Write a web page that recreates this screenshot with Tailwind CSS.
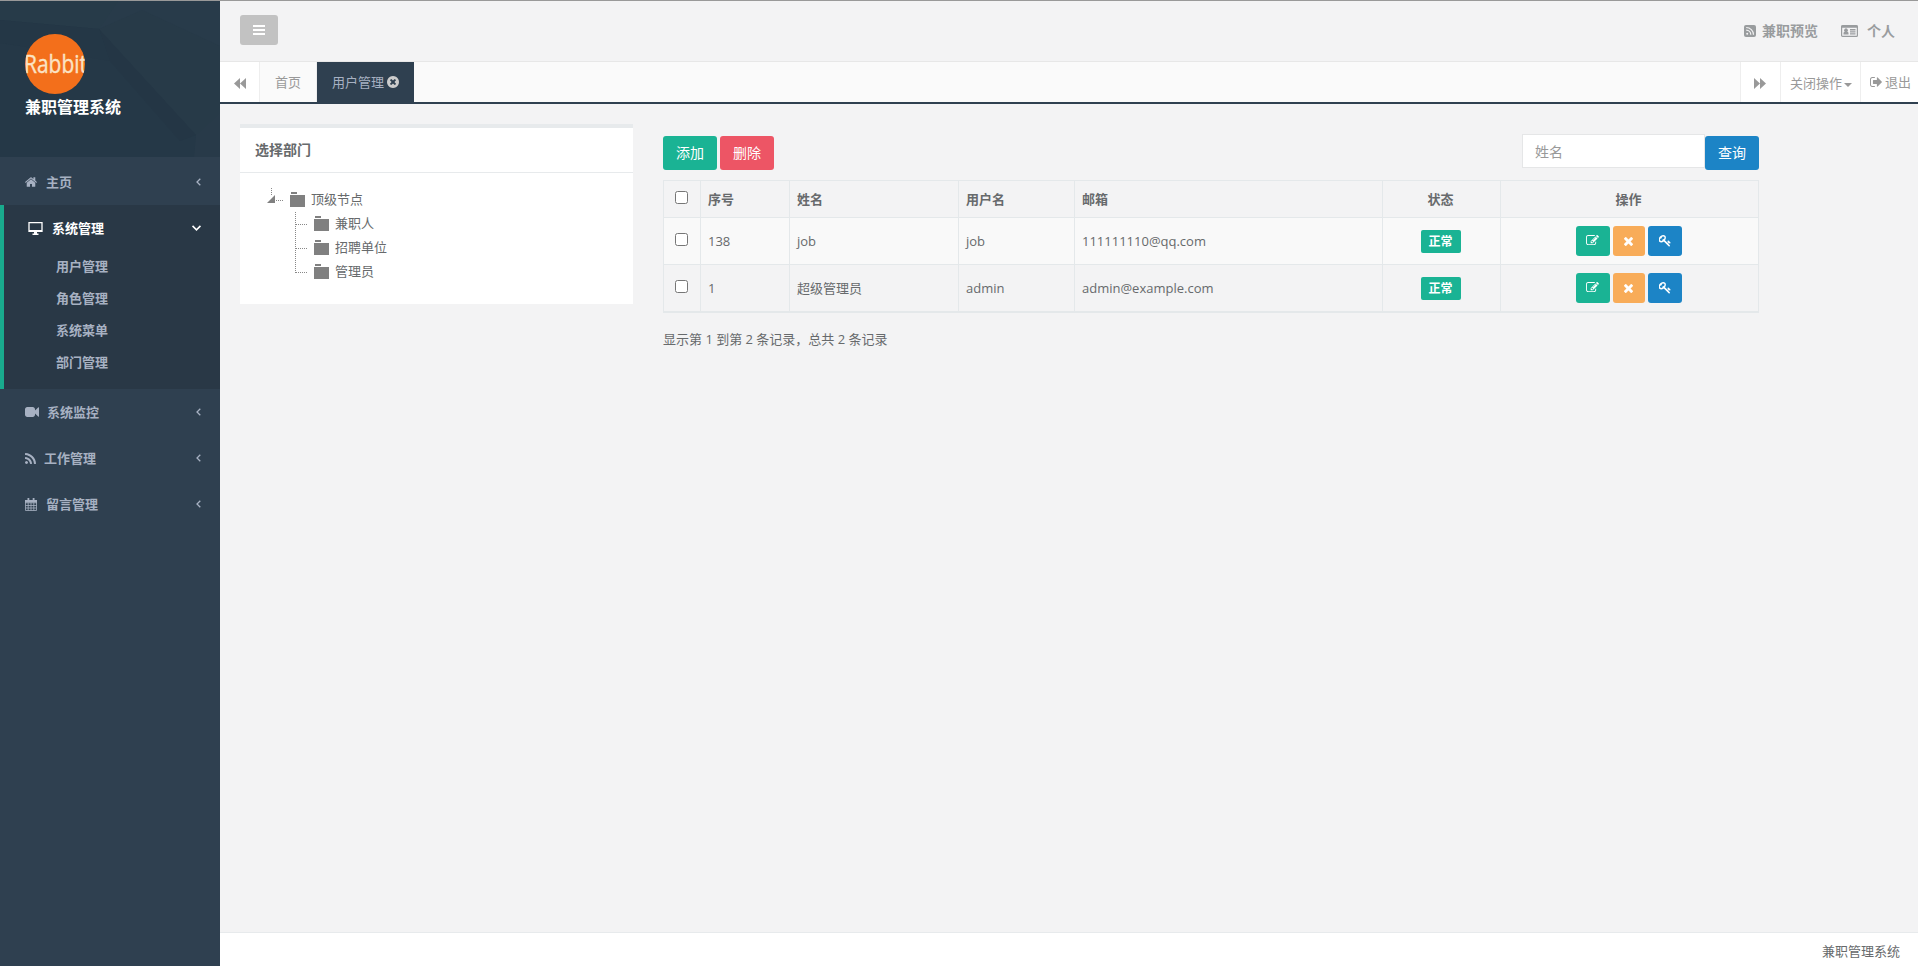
<!DOCTYPE html>
<html lang="zh-CN">
<head>
<meta charset="utf-8">
<title>兼职管理系统</title>
<script src="https://cdn.jsdelivr.net/npm/@tailwindcss/browser@4"></script>
</head>
<body class="h-[966px] w-[1918px] overflow-hidden border-t border-[#999] bg-[#2f4050] font-['Open_Sans','Noto_Sans_CJK_SC',sans-serif] text-[13px] leading-5 text-[#676a6c]">
<svg class="hidden">
  <symbol id="home" viewBox="89 253 1614 1283"><path d="M1472 992v480q0 26-19 45t-45 19h-384v-384h-256v384h-384q-26 0-45-19t-19-45v-480q0-1 .5-3t.5-3l575-474 575 474q1 2 1 6zm223-69l-62 74q-8 9-21 11h-3q-13 0-21-7l-692-577-692 577q-12 8-24 7-13-2-21-11l-62-74q-8-10-7-23.5t11-21.5l719-599q32-26 76-26t76 26l244 204v-195q0-14 9-23t23-9h192q14 0 23 9t9 23v408l219 182q10 8 11 21.5t-7 23.5z"/></symbol>
  <symbol id="video" viewBox="0 288 1792 1216"><path d="M1792 352v1088q0 42-39 59-13 5-25 5-27 0-45-19l-403-403v166q0 119-84.500 203.500t-203.500 84.500h-704q-119 0-203.500-84.500t-84.500-203.500v-704q0-119 84.500-203.500t203.500-84.500h704q119 0 203.500 84.500t84.500 203.500v165l403-402q18-19 45-19 12 0 25 5 39 17 39 59z"/></symbol>
  <symbol id="rss" viewBox="192 128 1408 1408"><path d="M576 1344q0 80-56 136t-136 56-136-56-56-136 56-136 136-56 136 56 56 136zm512 123q2 28-17 48-18 21-47 21h-135q-25 0-43-16.500t-20-41.500q-22-229-184.500-391.500t-391.500-184.500q-25-2-41.500-20t-16.500-43v-135q0-29 21-47 17-17 43-17h5q160 13 306 80.500t259 181.500q114 113 181.500 259t80.500 306zm512 2q2 27-18 47-18 20-46 20h-143q-26 0-44.500-17.500t-19.500-42.500q-12-215-101-408.500t-231.500-336-336-231.500-408.500-102q-25-1-42.500-19.500t-17.500-43.500v-143q0-28 20-46 18-18 44-18h3q262 13 501.500 120t425.500 294q187 186 294 425.500t120 501.500z"/></symbol>
  <symbol id="edit" viewBox="0 128 1792 1536"><path d="M888 1184l116-116-152-152-116 116v56h96v96h56zm440-720q-16-16-33 1l-350 350q-17 17-1 33t33-1l350-350q17-17 1-33zm80 594v190q0 119-84.500 203.500t-203.500 84.500h-832q-119 0-203.500-84.500t-84.500-203.500v-832q0-119 84.500-203.500t203.500-84.500h832q63 0 117 25 15 7 18 23 3 17-9 29l-49 49q-14 14-32 8-23-6-45-6h-832q-66 0-113 47t-47 113v832q0 66 47 113t113 47h832q66 0 113-47t47-113v-126q0-13 9-22l64-64q15-15 35-7t20 29zm-96-738l288 288-672 672h-288v-288zm444 132l-92 92-288-288 92-92q28-28 68-28t68 28l152 152q28 28 28 68t-28 68z"/></symbol>
  <symbol id="times" viewBox="302 366 1188 1188"><path d="M1490 1322q0 40-28 68l-136 136q-28 28-68 28t-68-28l-294-294-294 294q-28 28-68 28t-68-28l-136-136q-28-28-28-68t28-68l294-294-294-294q-28-28-28-68t28-68l136-136q28-28 68-28t68 28l294 294 294-294q28-28 68-28t68 28l136 136q28 28 28 68t-28 68l-294 294 294 294q28 28 28 68z"/></symbol>
  <symbol id="key" viewBox="64 128 1664 1664"><path d="M832 512q0-80-56-136t-136-56-136 56-56 136q0 42 19 83-41-19-83-19-80 0-136 56t-56 136 56 136 136 56 136-56 56-136q0-42-19-83 41 19 83 19 80 0 136-56t56-136zm851 704q0 17-49 66t-66 49q-9 0-28.500-16t-36.500-33-38.500-40-24.500-26l-96 96 220 220q28 28 28 68 0 42-39 81t-81 39q-40 0-68-28l-671-671q-176 131-365 131-163 0-265.500-102.500t-102.500-265.500q0-160 95-313t248-248 313-95q163 0 265.500 102.500t102.500 265.500q0 189-131 365l355 355 96-96q-3-3-26-24.500t-40-38.500-33-36.500-16-28.500q0-17 49-66t66-49q13 0 23 10 6 6 46 44.500t82 79.500 86.500 86 73 78 28.500 41z"/></symbol>
  <symbol id="circle-x" viewBox="128 128 1536 1536"><path d="M1277 1122q0-26-19-45l-181-181 181-181q19-19 19-45 0-27-19-46l-90-90q-19-19-46-19-26 0-45 19l-181 181-181-181q-19-19-45-19-27 0-46 19l-90 90q-19 19-19 46 0 26 19 45l181 181-181 181q-19 19-19 45 0 27 19 46l90 90q19 19 46 19 26 0 45-19l181-181 181 181q19 19 45 19 27 0 46-19l90-90q19-19 19-46zm387-226q0 209-103 385.500t-279.500 279.500-385.500 103-385.500-103-279.500-279.500-103-385.500 103-385.500 279.500-279.500 385.500-103 385.500 103 279.500 279.500 103 385.500z"/></symbol>
  <symbol id="signout" viewBox="64 256 1568 1280"><path d="M704 1440q0 4 1 20t.5 26.500-3 23.500-10 19.500-20.500 6.500h-320q-119 0-203.500-84.500t-84.500-203.500v-704q0-119 84.500-203.500t203.500-84.500h320q13 0 22.500 9.500t9.500 22.500q0 4 1 20t.5 26.500-3 23.500-10 19.500-20.500 6.500h-320q-66 0-113 47t-47 113v704q0 66 47 113t113 47h312l11.500 1 11.500 3 8 5.500 7 9 2 13.500zm928-544q0 26-19 45l-544 544q-19 19-45 19t-45-19-19-45v-288h-448q-26 0-45-19t-19-45v-384q0-26 19-45t45-19h448v-288q0-26 19-45t45-19 45 19l544 544q19 19 19 45z"/></symbol>
  <symbol id="chev" viewBox="0 0 5 8"><path d="M4.300.7 1 4l3.300 3.300" fill="none" stroke="currentColor" stroke-width="1.300"/></symbol>
  <symbol id="folder" viewBox="0 0 15 15"><path d="M1 0h6v2H1zM0 3h15v12H0z"/></symbol>
</svg>
<div class="flex h-[965px]">
  <nav class="w-[220px] shrink-0 font-semibold text-[#a7b1c2]">
    <header class="relative h-[156px] bg-[#253847] pl-[25px] pt-[33px]">
      <svg class="absolute inset-0" width="220" height="156" viewBox="0 0 220 156">
        <path d="M0 0H220V142L196 134 99 28 0 19z" fill="#283b4a"/>
        <path d="M118 0 99 28 0 19V0z" fill="#273b49"/>
        <path d="M99 28 142 9 220 45V142L196 134z" fill="#273a48"/>
        <path d="M99 28 196 134 180 140 110 60z" fill="#243645"/>
        <path d="M0 19 99 28 110 60 20 45 0 42z" fill="#243746"/>
        <path d="M196 134 220 112V156H194z" fill="#283a49"/>
      </svg>
      <svg class="relative block" width="60" height="60" viewBox="0 0 60 60">
        <clipPath id="disc"><circle cx="30" cy="30" r="30"/></clipPath>
        <g clip-path="url(#disc)"><path d="M0 0h60v60H0z" fill="#f36f1b"/><text x="-1" y="39" font-family="Open Sans" font-weight="400" font-size="25" textLength="63" lengthAdjust="spacingAndGlyphs" fill="#fbe3c4" stroke="#fbe3c4" stroke-width=".4">Rabbit</text></g>
      </svg>
      <h1 class="relative mt-[3px] text-base leading-5 font-bold text-white">兼职管理系统</h1>
    </header>
    <ul class="pt-0.5">
      <li class="flex h-[46px] items-center pl-[25px] pr-[19px]"><svg class="h-[10px] w-3 fill-current"><use href="#home"/></svg><span class="ml-[9px] pb-px">主页</span><svg class="ml-auto h-2 w-[5px]"><use href="#chev"/></svg></li>
      <li class="h-[184px] border-l-4 border-[#19aa8d] bg-[#293846]">
        <div class="flex h-[46px] items-center pl-6 pr-[21px] font-bold text-white"><svg class="h-[13px] w-[15px]" viewBox="0 0 15 13"><path d="M1 .7h13v8.600H1z" fill="none" stroke="currentColor" stroke-width="1.300"/><path d="M1 8h13v2H1zM6 10h3v1.500h1.500V13h-6v-1.500H6z" fill="currentColor"/></svg><span class="ml-[9px] pb-px">系统管理</span><svg class="ml-auto h-2 w-[5px] -rotate-90 scale-120"><use href="#chev"/></svg></div>
        <ul class="-mt-px pl-[52px] leading-8"><li>用户管理</li><li>角色管理</li><li>系统菜单</li><li>部门管理</li></ul>
      </li>
      <li class="flex h-[46px] items-center pl-[25px] pr-[19px]"><svg class="h-[10px] w-[14px] fill-current"><use href="#video"/></svg><span class="ml-2 pb-px">系统监控</span><svg class="ml-auto h-2 w-[5px]"><use href="#chev"/></svg></li>
      <li class="flex h-[46px] items-center pl-[25px] pr-[19px]"><svg class="h-[11px] w-[11px] fill-current"><use href="#rss"/></svg><span class="ml-2 pb-px">工作管理</span><svg class="ml-auto h-2 w-[5px]"><use href="#chev"/></svg></li>
      <li class="flex h-[46px] items-center pl-[25px] pr-[19px]"><svg class="h-[13px] w-3" viewBox="0 0 12 13"><path d="M.5 2.500h11v10H.5zM0 4.800h12M.5 7.500h11M.5 10h11M3.200 4.500v8M6 4.500v8M8.800 4.500v8" fill="none" stroke="currentColor" stroke-width=".8"/><path d="M0 2h12v2.500H0zM2.500 0h1.800v3H2.500zM7.700 0h1.800v3H7.700z" fill="currentColor"/></svg><span class="ml-[9px] pb-px">留言管理</span><svg class="ml-auto h-2 w-[5px]"><use href="#chev"/></svg></li>
    </ul>
  </nav>
  <div class="flex w-[1698px] flex-col bg-[#f3f3f4]">
    <div class="flex h-[60px] shrink-0 items-start pl-5 pr-[23px] pt-[14px] text-sm font-semibold text-[#999c9e]">
      <button class="flex h-[30px] w-[38px] items-center justify-center rounded-[3px] bg-[#c2c2c2]"><svg width="12" height="10" viewBox="0 0 12 10" fill="#fff"><path d="M0 0h12v2H0zM0 4h12v2H0zM0 8h12v2H0z"/></svg></button>
      <a class="ml-auto flex h-8 items-center"><svg class="mr-1.5" width="12" height="12" viewBox="0 0 12 12"><rect width="12" height="12" rx="2" fill="currentColor"/><circle cx="3.200" cy="8.800" r="1" fill="#f3f3f4"/><path d="M2.200 5.200a4.600 4.600 0 0 1 4.600 4.600M2.200 2.500a7.300 7.300 0 0 1 7.300 7.300" fill="none" stroke="#f3f3f4" stroke-width="1.200"/></svg>兼职预览</a>
      <a class="ml-[23px] flex h-8 items-center"><svg class="mr-[9px]" width="17" height="12" viewBox="0 0 17 12"><rect x=".6" y=".6" width="15.800" height="10.800" rx="1" fill="none" stroke="currentColor" stroke-width="1.200"/><path d="M.5.500h16v2.300H.5zM2.500 9.500V8q.2-1.300 1.300-1.300a1.900 1.900 0 1 1 2.400 0q1.100 0 1.300 1.300v1.500zM9 4.100h5.500v1.300H9zM9 6.200h5.500v1.300H9zM9 8.300h5.500v1.300H9z" fill="currentColor"/></svg>个人</a>
    </div>
    <div class="flex h-[43px] shrink-0 border-b-2 border-t border-b-[#2f4050] border-t-[#e7e7e7] bg-[#fafafa] text-[#999]">
      <div class="flex w-10 items-center border-r border-[#eee] bg-white pl-[14px] pt-0.5"><svg width="12" height="11" viewBox="0 0 12 11" fill="currentColor"><path d="M6 0v11L0 5.500zM12 0v11L6 5.500z"/></svg></div>
      <div class="flex w-[57px] items-center justify-center border-r border-[#eee] pb-px">首页</div>
      <div class="flex w-[97px] items-center justify-center bg-[#2f4050] pb-px text-[#a7b1c2]">用户管理<svg class="ml-[3px] h-3 w-3 fill-[#ccc]"><use href="#circle-x"/></svg></div>
      <div class="ml-auto flex w-10 items-center border-l border-[#eee] bg-white pl-[13px] pt-0.5"><svg width="12" height="11" viewBox="0 0 12 11" fill="currentColor"><path d="M0 0v11l6-5.500zM6 0v11l6-5.500z"/></svg></div>
      <div class="flex w-20 items-center border-l border-[#eee] bg-white pl-[9px] pt-px">关闭操作<svg class="ml-[2px] mt-1" width="8" height="4" viewBox="0 0 8 4" fill="currentColor"><path d="M0 0h8L4 4z"/></svg></div>
      <div class="flex w-[58px] items-center border-l border-[#eee] bg-white pb-px pl-[9px]"><svg class="mr-[3px] h-[10px] w-3 fill-current"><use href="#signout"/></svg>退出</div>
    </div>
    <main class="flex flex-1 items-start pl-5 pt-5">
      <section class="h-[180px] w-[393px] border-t-4 border-[#e7eaec] bg-white">
        <h2 class="h-[45px] border-b border-[#e7eaec] pl-[15px] pt-[12px] text-sm leading-5 font-semibold">选择部门</h2>
        <div class="pl-[27px] pt-[15px] leading-[23px]">
          <div class="flex h-6 items-start"><svg class="mr-[6px]" width="17" height="24" viewBox="0 0 17 24"><path d="M4.500 0v8M9 12.500h8" stroke="#888" stroke-dasharray="1 1" fill="none"/><path d="M8 7v8H0z" fill="#808080"/></svg><svg class="mr-[6px] mt-1 h-[15px] w-[15px] fill-[#808080]"><use href="#folder"/></svg>顶级节点</div>
          <div class="flex h-6 items-start pl-7"><svg class="mr-[6px]" width="13" height="24" viewBox="0 0 13 24"><path d="M.5 0v24M1 12.500h12" stroke="#888" stroke-dasharray="1 1" fill="none"/></svg><svg class="mr-[6px] mt-1 h-[15px] w-[15px] fill-[#808080]"><use href="#folder"/></svg>兼职人</div>
          <div class="flex h-6 items-start pl-7"><svg class="mr-[6px]" width="13" height="24" viewBox="0 0 13 24"><path d="M.5 0v24M1 12.500h12" stroke="#888" stroke-dasharray="1 1" fill="none"/></svg><svg class="mr-[6px] mt-1 h-[15px] w-[15px] fill-[#808080]"><use href="#folder"/></svg>招聘单位</div>
          <div class="flex h-6 items-start pl-7"><svg class="mr-[6px]" width="13" height="24" viewBox="0 0 13 24"><path d="M.5 0v13M1 12.500h12" stroke="#888" stroke-dasharray="1 1" fill="none"/></svg><svg class="mr-[6px] mt-1 h-[15px] w-[15px] fill-[#808080]"><use href="#folder"/></svg>管理员</div>
        </div>
      </section>
      <section class="ml-[30px] w-[1096px] pt-[10px]">
        <div class="flex h-[46px] items-start text-sm">
          <button class="mt-0.5 mr-[3px] h-[34px] w-[54px] rounded-[3px] bg-[#1ab394] text-white">添加</button>
          <button class="mt-0.5 h-[34px] w-[54px] rounded-[3px] bg-[#ed5565] text-white">删除</button>
          <input class="ml-auto h-[34px] w-[183px] border border-[#e5e6e7] bg-white px-3 placeholder:text-[#999]" placeholder="姓名">
          <button class="mt-0.5 h-[34px] w-[54px] rounded-[3px] bg-[#1c84c6] text-white">查询</button>
        </div>
        <div class="border-b-2 border-r border-[#e4e8ea] *:grid *:grid-cols-[37px_89px_169px_116px_308px_118px_258px] *:border-t *:border-[#e4e8ea] *:*:flex *:*:items-center *:*:border-l *:*:border-[#e4e8ea] *:*:pl-[7px] *:*:pr-[9px]">
          <div class="h-[37px] font-semibold">
            <div class="justify-center pb-[3px]"><input type="checkbox" class="h-[13px] w-[13px]"></div><div>序号</div><div>姓名</div><div>用户名</div><div>邮箱</div><div class="justify-center">状态</div><div class="justify-center">操作</div>
          </div>
          <div class="h-[47px] bg-[#f9f9f9]">
            <div class="justify-center pb-[3px]"><input type="checkbox" class="h-[13px] w-[13px]"></div><div>138</div><div>job</div><div>job</div><div>111111110@qq.com</div>
            <div class="justify-center"><span class="h-[23px] w-10 rounded-[2px] bg-[#1ab394] text-center text-xs leading-[23px] font-semibold text-white">正常</span></div>
            <div class="justify-center gap-[3px] text-white"><span class="flex h-[30px] w-[34px] items-center justify-center rounded-[3px] bg-[#1ab394] pb-0.5"><svg class="h-[11px] w-[13px] fill-current"><use href="#edit"/></svg></span><span class="flex h-[30px] w-8 items-center justify-center rounded-[3px] bg-[#f8ac59]"><svg class="h-[9px] w-[9px] fill-current"><use href="#times"/></svg></span><span class="flex h-[30px] w-[34px] items-center justify-center rounded-[3px] bg-[#1c84c6]"><svg class="h-3 w-3 fill-current"><use href="#key"/></svg></span></div>
          </div>
          <div class="h-[47px]">
            <div class="justify-center pb-[3px]"><input type="checkbox" class="h-[13px] w-[13px]"></div><div>1</div><div>超级管理员</div><div>admin</div><div>admin@example.com</div>
            <div class="justify-center"><span class="h-[23px] w-10 rounded-[2px] bg-[#1ab394] text-center text-xs leading-[23px] font-semibold text-white">正常</span></div>
            <div class="justify-center gap-[3px] text-white"><span class="flex h-[30px] w-[34px] items-center justify-center rounded-[3px] bg-[#1ab394] pb-0.5"><svg class="h-[11px] w-[13px] fill-current"><use href="#edit"/></svg></span><span class="flex h-[30px] w-8 items-center justify-center rounded-[3px] bg-[#f8ac59]"><svg class="h-[9px] w-[9px] fill-current"><use href="#times"/></svg></span><span class="flex h-[30px] w-[34px] items-center justify-center rounded-[3px] bg-[#1c84c6]"><svg class="h-3 w-3 fill-current"><use href="#key"/></svg></span></div>
          </div>
        </div>
        <p class="mt-4">显示第 1 到第 2 条记录，总共 2 条记录</p>
      </section>
    </main>
    <footer class="h-[34px] shrink-0 border-t border-[#e7eaec] bg-white pr-[18px] pt-2 text-right">兼职管理系统</footer>
  </div>
</div>
</body>
</html>
